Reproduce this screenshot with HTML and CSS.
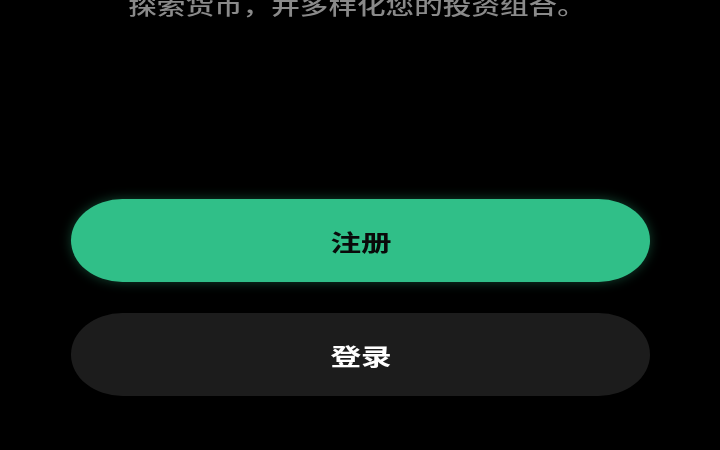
FILE: index.html
```html
<!DOCTYPE html>
<html lang="zh-CN">
<head>
<meta charset="utf-8">
<title>欢迎</title>
<link rel="stylesheet" href="styles.css">
</head>
<body>
<main class="screen">
  <p class="tagline"><span class="stretch">探索货币，并多样化您的投资组合。</span></p>
  <div class="actions">
    <button class="btn btn-primary"><span class="stretch">注册</span></button>
    <button class="btn btn-secondary"><span class="stretch">登录</span></button>
  </div>
</main>
</body>
</html>
```
FILE: styles.css
```css
html, body {
  margin: 0;
  padding: 0;
  background: #000;
  height: 100%;
  overflow: hidden;
}
.screen {
  font-family: "Noto Sans CJK SC", "Noto Sans", sans-serif;
  padding: 0 70px 0 71px;
  display: flex;
  flex-direction: column;
}
.tagline {
  margin: -11px 0 0;
  padding-right: 6px;
  text-align: center;
  color: #8a8a8a;
  font-size: 21.5px;
  line-height: 32px;
  font-weight: 500;
  filter: blur(0.5px);
}
.stretch {
  display: inline-block;
  transform: scaleX(1.33);
}
.actions {
  margin-top: 178px;
  display: flex;
  flex-direction: column;
  gap: 31px;
}
.btn {
  height: 83px;
  border: none;
  border-radius: 52px / 42px;
  font-family: inherit;
  font-size: 23px;
  font-weight: 700;
  display: flex;
  align-items: center;
  justify-content: center;
  padding: 0;
}
.btn-primary {
  background: #30bf88;
  color: #0a0a0a;
  box-shadow: 0 0 12px rgba(48, 191, 136, 0.35);
}
.btn-secondary {
  background: #1c1c1c;
  color: #ffffff;
}
```
